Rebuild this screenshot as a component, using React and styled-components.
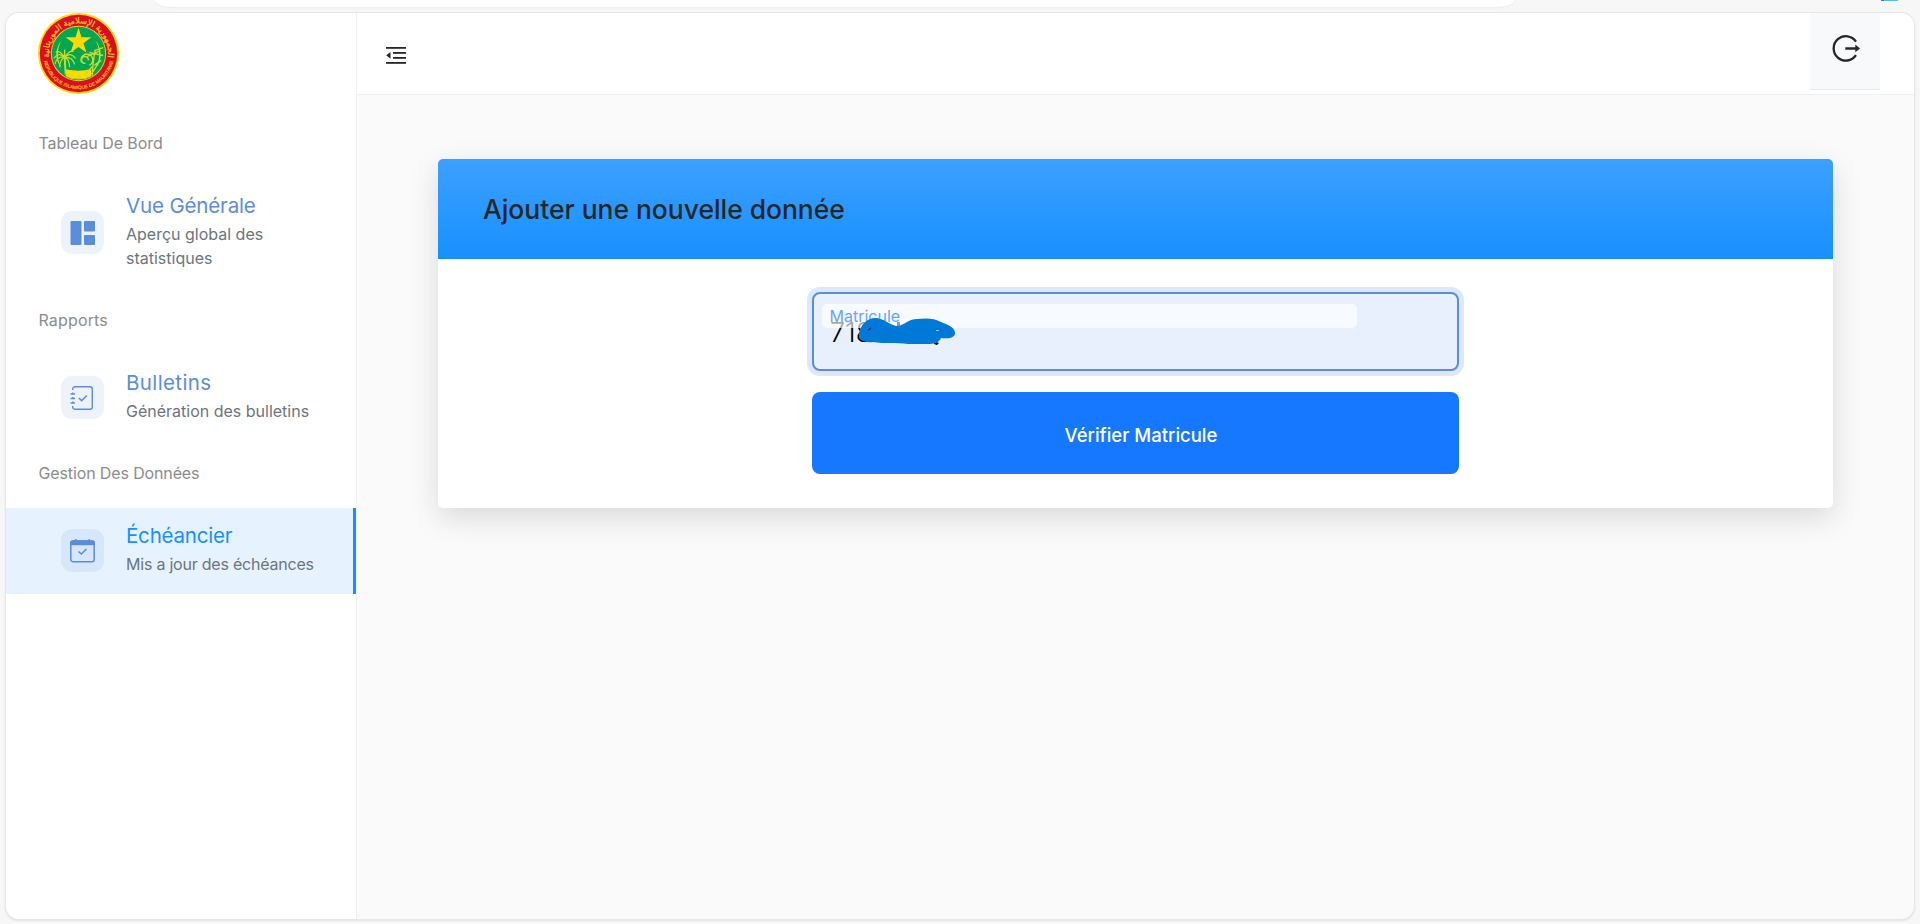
import React from 'react';
import styled, { createGlobalStyle } from 'styled-components';

const Global = createGlobalStyle`
  *, *::before, *::after { box-sizing: border-box; }
  body { margin: 0; background: #f7f7f7; overflow: hidden; }
  body, button, input { font-family: Inter, "Liberation Sans", sans-serif; }
`;

const Screen = styled.div`
  width: 1920px;
  height: 924px;
  display: flex;
  flex-direction: column;
  overflow: hidden;
  background: #f7f7f7;
`;

const BrowserStrip = styled.div`
  height: 13px;
  flex: none;
  display: flex;
  align-items: flex-start;
  padding-left: 155px;
`;

const AddressBar = styled.div`
  width: 1359px;
  height: 7px;
  background: #fff;
  border-radius: 0 0 18px 18px / 0 0 7px 7px;
  box-shadow: 0 1px 3px rgba(0, 0, 0, 0.05);
`;

const ExtensionMark = styled.div`
  width: 17px;
  height: 1px;
  margin-left: 367px;
  background: linear-gradient(90deg, #3b6fd8 0 3px, #4cc3ea 3px);
`;

const Window = styled.div`
  width: 1908px;
  height: 906px;
  margin-left: 6px;
  display: flex;
  border-radius: 13px;
  background: #fafafa;
  overflow: hidden;
  box-shadow: 0 0 0 1px #e7e7e7, 0 1px 2px 1px rgba(0, 0, 0, 0.09);
`;

const Sidebar = styled.aside`
  width: 351px;
  flex: none;
  background: #fff;
  border-right: 1px solid #f0f0f0;
`;

const LogoBox = styled.div`
  height: 81px;
  padding-left: 32px;
  svg { display: block; }
`;

const Group = styled.section`
  padding-top: ${(p) => p.$top}px;
`;

const GroupTitle = styled.h2`
  margin: 0 0 23px;
  padding-left: 32.5px;
  font-size: 16px;
  line-height: 24px;
  font-weight: 400;
  letter-spacing: ${(p) => p.$spacing}px;
  color: #8c8c8c;
`;

const NavItem = styled.a`
  display: flex;
  align-items: center;
  height: ${(p) => p.$height}px;
  padding: 0 20px 1px 55px;
  gap: 22px;
  background: ${(p) => (p.$active ? '#e6f3ff' : 'transparent')};
  border-right: 3px solid ${(p) => (p.$active ? '#1890ff' : 'transparent')};
`;

const IconTile = styled.span`
  width: 43px;
  height: 43px;
  flex: none;
  display: grid;
  place-items: center;
  border-radius: 11px;
  background: rgba(91, 141, 217, 0.11);
  color: #5b8dd9;
`;

const NavText = styled.span`
  display: flex;
  flex-direction: column;
  padding-bottom: 4px;
`;

const NavTitle = styled.span`
  font-size: 20.5px;
  line-height: 30px;
  padding-bottom: 1px;
  letter-spacing: ${(p) => p.$spacing}px;
  color: ${(p) => (p.$active ? '#1890ff' : '#5b8dd9')};
`;

const NavSub = styled.span`
  font-size: 16px;
  line-height: 24px;
  letter-spacing: ${(p) => p.$spacing || 0}px;
  color: #6c757d;
  white-space: pre;
`;

const Main = styled.main`
  flex: 1;
  display: flex;
  flex-direction: column;
`;

const TopBar = styled.header`
  height: 82px;
  flex: none;
  display: flex;
  justify-content: space-between;
  align-items: flex-start;
  padding: 0 34px 0 29px;
  background: #fff;
  border-bottom: 1px solid #f0f0f0;
`;

const MenuButton = styled.button`
  border: 0;
  padding: 33px 0 0;
  background: none;
  color: #262626;
  svg { display: block; }
`;

const LogoutButton = styled.button`
  width: 70px;
  height: 77px;
  display: flex;
  justify-content: center;
  align-items: flex-start;
  padding: 21px 0 0 1px;
  border: 0;
  border-bottom: 1px solid #e6eaef;
  background: #f8f9fb;
  color: #262626;
`;

const Content = styled.div`
  flex: 1;
  padding: 64px 81px;
`;

const Card = styled.section`
  height: 349px;
  border-radius: 5px;
  background: #fff;
  box-shadow: 0 10px 30px rgba(0, 0, 0, 0.13);
  overflow: hidden;
`;

const CardHeader = styled.div`
  height: 100px;
  display: flex;
  align-items: center;
  padding: 0 45px;
  background: linear-gradient(180deg, #3ca0ff, #1890ff);
`;

const CardTitle = styled.h1`
  margin: 0;
  font-size: 26.5px;
  line-height: 34px;
  font-weight: 500;
  letter-spacing: -0.05px;
  color: #262626;
`;

const Form = styled.div`
  width: 647px;
  margin: 33px auto 0;
  display: flex;
  flex-direction: column;
  gap: 21px;
`;

const Field = styled.div`
  position: relative;
  height: 79px;
  border: 2px solid #5b8dd9;
  border-radius: 8px;
  background: #e8effd;
  box-shadow: 0 0 0 5px #dbe8fe;
`;

const FieldValue = styled.span`
  position: absolute;
  left: 16px;
  top: 23px;
  font-size: 27px;
  font-weight: 350;
  line-height: 32px;
  color: #000;
`;

const FieldLabel = styled.label`
  position: absolute;
  left: 8px;
  top: 10px;
  width: 535px;
  height: 24px;
  padding-left: 7.5px;
  border-radius: 5px;
  background: rgba(255, 255, 255, 0.65);
  font-size: 16px;
  line-height: 24px;
  color: #69a5fb;
`;

const Redaction = styled.svg`
  position: absolute;
  left: 43px;
  top: 18px;
`;

const SubmitButton = styled.button`
  height: 82px;
  border: 0;
  border-radius: 8px;
  padding: 4px 0 0 11px;
  background: #1677ff;
  font-size: 18.5px;
  font-weight: 500;
  color: #fff;
`;

function Palm({ x, y }) {
  return (
    <g transform={`translate(${x} ${y})`} fill="none" stroke="#c9dc2c" strokeWidth="1.3">
      <path d="M0 0 Q-6 -6 -11 1 M0 0 Q-8 -2 -10 7 M0 0 Q-5 2 -5 10 M0 0 Q6 -6 11 1 M0 0 Q8 -1 10 7 M0 0 Q5 2 5 10 M0 0 Q-5 -8 -9 -5 M0 0 Q5 -8 9 -6 M0 0 V-8" />
      <path d="M0 0 L1 17" strokeWidth="2" />
    </g>
  );
}

function Seal() {
  return (
    <svg width="81" height="81" viewBox="0 0 82 82">
      <defs>
        <path id="sealTop" d="M11.5 46 A30 30 0 1 1 70.5 46" />
        <path id="sealBottom" d="M5 41 A36 36 0 0 0 77 41" />
        <clipPath id="sealClip"><circle cx="41" cy="41" r="26.5" /></clipPath>
      </defs>
      <circle cx="41" cy="41" r="41" fill="#ffd900" />
      <circle cx="41" cy="41" r="39.2" fill="#d80f23" />
      <circle cx="41" cy="41" r="28" fill="#e8d21c" />
      <circle cx="41" cy="41" r="27" fill="#00a650" />
      <g clipPath="url(#sealClip)">
        <path d="M28 57 Q41 60 54 57 V67 H28Z" fill="#ffd900" />
        <path d="M20 62 Q41 71 62 62 V72 H20Z" fill="#00a650" />
        <path d="M22 64 Q41 70 60 64" fill="none" stroke="#d7dd20" />
        <path d="M24 27 Q13 43 24 56 Q16 42 24 27Z M58 27 Q69 43 58 56 Q66 42 58 27Z" fill="#ffd900" />
        <Palm x={27} y={45} />
        <path d="M48 51 a3.5 3.5 0 1 1 3 -3 M44 50 a6 6 0 1 1 8 3 M58 37 Q55 52 55 65 M47 63 L55 54 M61 51 L54 62 M64 48 L57 53 M50 44 L63 38 M52 40 L66 43 M57 38 L66 35" fill="none" stroke="#c9dc2c" strokeWidth="1.4" />
      </g>
      <path d="M41 15 L44 24.6 H54 L46 30.6 L49 40 L41 34.3 L33 40 L36 30.6 L28 24.6 H38Z" fill="#ffd900" />
      <text fontFamily="DejaVu Sans, sans-serif" fontSize="8.2" fill="#f8c21c" stroke="#f8c21c" strokeWidth=".25" textAnchor="middle">
        <textPath href="#sealTop" startOffset="50%">الجمهورية الإسلامية الموريتانية</textPath>
      </text>
      <text fontFamily="Liberation Sans, sans-serif" fontSize="4.8" fill="#f8c21c" stroke="#f8c21c" strokeWidth=".15" textAnchor="middle">
        <textPath href="#sealBottom" startOffset="50%">REPUBLIQUE ISLAMIQUE DE MAURITANIE</textPath>
      </text>
    </svg>
  );
}

function DashboardIcon() {
  return (
    <svg width="25" height="24" viewBox="0 0 25 24" fill="currentColor">
      <rect x="0.5" y="0" width="11" height="24" rx="1" />
      <rect x="14" y="0" width="11" height="10.5" rx="1" />
      <rect x="14" y="14" width="11" height="10" rx="1" />
    </svg>
  );
}

function JournalIcon() {
  return (
    <svg width="25" height="24" viewBox="0 0 25 24" fill="none" stroke="currentColor" strokeWidth="1.4">
      <path d="M2.7 4 V3 A2.3 2.3 0 0 1 5 .7 H20 A2.3 2.3 0 0 1 22.3 3 V21 A2.3 2.3 0 0 1 20 23.3 H5 A2.3 2.3 0 0 1 2.7 21 V20" />
      <path d="M.5 8 H5 M.5 12.5 H5 M.5 17 H5 M2.7 6.5 V8 M2.7 11 V12.5 M2.7 15.5 V17" />
      <path d="M8.8 12 L11.7 14.7 L16.8 9.5" strokeWidth="1.6" />
    </svg>
  );
}

function CalendarIcon() {
  return (
    <svg width="25" height="24" viewBox="0 0 25 24" fill="none" stroke="currentColor" strokeWidth="1.5">
      <rect x=".8" y="2" width="23.4" height="20.7" rx="2.3" />
      <path d="M.8 5.5 V4 A2 2 0 0 1 2.8 2 H22.2 A2 2 0 0 1 24.2 4 V5.5Z" fill="currentColor" />
      <path d="M5.7 0 V3 M19.3 0 V3" />
      <path d="M8.5 12.5 L11.3 15 L16.5 10" strokeWidth="1.6" />
    </svg>
  );
}

function FoldIcon() {
  return (
    <svg width="20" height="19" viewBox="0 0 20 19" fill="currentColor">
      <rect y="1" width="20" height="1.8" />
      <rect x="7" y="6" width="13" height="1.8" />
      <rect x="7" y="11" width="13" height="1.8" />
      <rect y="16" width="20" height="1.8" />
      <path d="M.2 9.3 L4.5 6 V12.8Z" />
    </svg>
  );
}

function LogoutIcon() {
  return (
    <svg width="28" height="28" viewBox="0 0 28 28" fill="none" stroke="currentColor" strokeWidth="2.3">
      <path d="M24 7.6 A12.2 12.2 0 1 0 24 21.2" />
      <path d="M13.3 14.4 H24" strokeWidth="2.5" />
      <path d="M23.3 10.6 L28 14.4 L23.3 18.2Z" fill="currentColor" stroke="none" />
    </svg>
  );
}

const groups = [
  {
    title: 'Tableau De Bord', top: 37, height: 110, icon: DashboardIcon, titleSpacing: -0.07,
    label: 'Vue Générale', spacing: -0.15, text: 'Aperçu global des\nstatistiques',
  },
  {
    title: 'Rapports', top: 20, height: 86, icon: JournalIcon, titleSpacing: 0.15,
    label: 'Bulletins', spacing: 0.38, text: 'Génération des bulletins',
  },
  {
    title: 'Gestion Des Données', top: 20, height: 86, icon: CalendarIcon, active: true, titleSpacing: -0.13,
    label: 'Échéancier', spacing: -0.2, text: 'Mis a jour des échéances', textSpacing: -0.22,
  },
];

export default function App() {
  return (
    <Screen>
      <Global />
      <BrowserStrip>
        <AddressBar />
        <ExtensionMark />
      </BrowserStrip>
      <Window>
        <Sidebar>
          <LogoBox><Seal /></LogoBox>
          {groups.map(({ title, top, height, icon: Icon, active, titleSpacing, label, spacing, text, textSpacing }) => (
            <Group key={title} $top={top}>
              <GroupTitle $spacing={titleSpacing}>{title}</GroupTitle>
              <NavItem $height={height} $active={active}>
                <IconTile><Icon /></IconTile>
                <NavText>
                  <NavTitle $active={active} $spacing={spacing}>{label}</NavTitle>
                  <NavSub $spacing={textSpacing}>{text}</NavSub>
                </NavText>
              </NavItem>
            </Group>
          ))}
        </Sidebar>
        <Main>
          <TopBar>
            <MenuButton><FoldIcon /></MenuButton>
            <LogoutButton><LogoutIcon /></LogoutButton>
          </TopBar>
          <Content>
            <Card>
              <CardHeader><CardTitle>Ajouter une nouvelle donnée</CardTitle></CardHeader>
              <Form>
                <Field>
                  <FieldValue>718</FieldValue>
                  <FieldLabel>Matricule</FieldLabel>
                  <Redaction width="104" height="36" viewBox="0 0 104 36">
                    <path d="M40 10 h3 v6 h-3z" fill="#999" />
                    <path d="M77 29 L82 31 L80 33 L77 32Z" fill="#000" />
                    <path d="M2 21 C4 12 11 5 20 6 C30 8 35 15 42 14 C50 11 52 7 60 7 C70 6 77 6 84 10 C92 13 98 16 98 21 C98 25 94 27 84 26 C82 31 77 32 70 32 H51 C40 30 27 32 16 30 C7 31 1 28 2 21Z" fill="#0078d7" />
                    <path d="M11.5 18 l2.5 -2" stroke="#123" strokeWidth="1.2" />
                    <path d="M79 18.5 l3 0" stroke="#9cc6ee" strokeWidth="1" />
                  </Redaction>
                </Field>
                <SubmitButton>Vérifier Matricule</SubmitButton>
              </Form>
            </Card>
          </Content>
        </Main>
      </Window>
    </Screen>
  );
}
